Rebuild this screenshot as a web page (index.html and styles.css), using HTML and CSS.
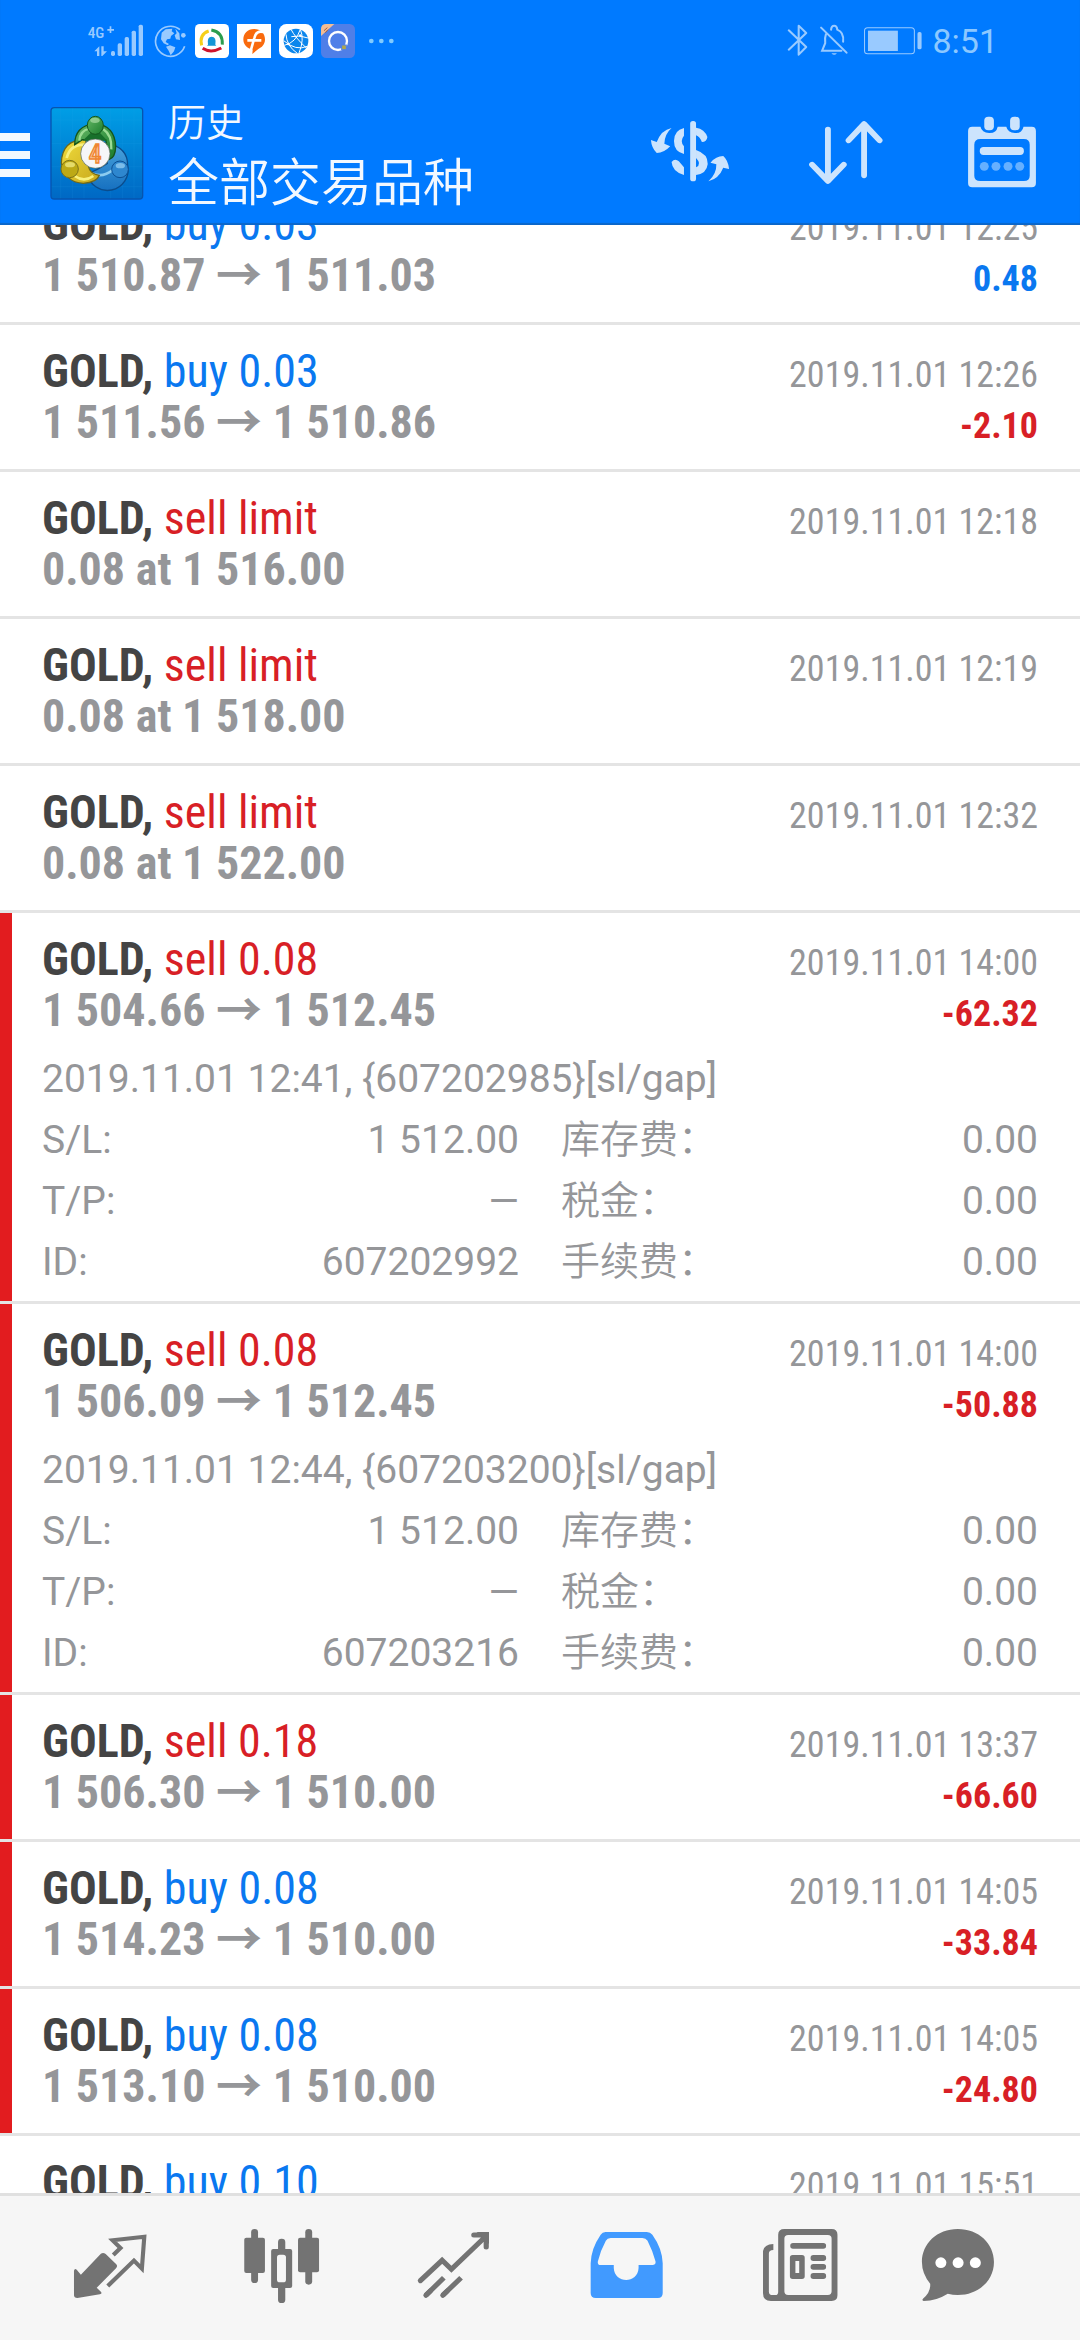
FILE: index.html
```
<!DOCTYPE html>
<html lang="zh-CN">
<head>
<meta charset="utf-8">
<meta name="viewport" content="width=device-width">
<title>历史</title>
<link rel="stylesheet" href="styles.css">
</head>
<body>
<header class="top">
  <div class="status">
    <svg width="57" height="34" viewBox="24 26 171 102" fill="#99caff" aria-hidden="true">
      <text class="network" x="23" y="68">4G</text>
      <path d="M82 41h20v5H82zM89 33h5v20h-5z"/>
      <path d="M43 108L58 93V122H51V108ZM64 93h7v15h10L67 122h-3z"/>
      <rect x="93" y="107" width="12" height="15" rx="5"/><rect x="113" y="84" width="13" height="38" rx="5"/><rect x="134" y="65" width="13" height="57" rx="5"/><rect x="155" y="46" width="13" height="76" rx="5"/><rect x="176" y="28" width="13" height="94" rx="5"/>
    </svg>
    <svg width="34" height="34" viewBox="219 26 102 102" aria-hidden="true">
      <path d="M300 43A45 45 0 1 0 314 93" fill="none" stroke="#99caff" stroke-width="5"/>
      <circle cx="310" cy="60" r="7" fill="#99caff"/>
      <path d="M245 52l12-10 20-2-2 8 8 6-10 8-2 8-10 2-4 8 10 6-4 4-12-6-8-12zM286 40l12 14 2 20-12-2-4-12 6-6zM258 94l12-4 16 6-4 12-10 12-6-14z" fill="#99caff"/>
    </svg>
    <svg width="34" height="34" viewBox="345 26 102 102" fill="none" stroke-width="9" aria-hidden="true">
      <rect x="345" y="26" width="102" height="102" rx="14" fill="#fff"/>
      <path d="M365 90Q357 57 386 47" stroke="#f5cf18"/>
      <path d="M394 44Q429 50 427 88" stroke="#2a9d4e"/>
      <path d="M368 99Q392 115 424 98" stroke="#d0142c"/>
      <path d="M384 88q-4-24 11-24t11 24l3 3h-28z" fill="#1596d6"/>
    </svg>
    <svg width="34" height="34" viewBox="141 26 102 102" aria-hidden="true">
      <rect x="141" y="26" width="102" height="102" fill="#fff"/>
      <path d="M192 41c20 0 33 14 33 31 0 16-10 25-20 29l-18 15 1-13c-17-3-28-15-28-31 0-17 13-31 32-31z" fill="#f96a0d"/>
      <path d="M220 50Q198 45 193 68L181 110M172 75h42" fill="none" stroke="#fff" stroke-width="8"/>
    </svg>
    <svg width="34" height="34" viewBox="267 26 102 102" aria-hidden="true">
      <rect x="267" y="26" width="102" height="102" rx="22" fill="#fff"/>
      <circle cx="318" cy="77" r="37" fill="#0b86ec"/>
      <path d="M303 42Q315 66 349 98M283 90Q318 82 331 42M288 57Q290 92 322 114M331 42Q344 72 327 113M304 64Q330 58 354 68M281 76Q318 108 352 93" fill="none" stroke="#fff" stroke-width="3"/>
      <circle cx="331" cy="61" r="4" fill="#fff"/><circle cx="295" cy="86" r="4" fill="#fff"/>
    </svg>
    <svg width="34" height="34" viewBox="393 26 102 102" aria-hidden="true">
      <rect x="393" y="26" width="102" height="102" rx="16" fill="#4f7fe8"/>
      <path d="M393 62V42q0-16 16-16h24z" fill="#f3bd94"/>
      <path d="M402 46l10-9M406 52l8-9" stroke="#a85a3a" stroke-width="3"/>
      <circle cx="444" cy="77" r="27" fill="none" stroke="#fff" stroke-width="7"/>
      <rect x="455" y="89" width="14" height="14" fill="#b2a84c" stroke="#4f7fe8" stroke-width="3"/>
    </svg>
    <svg width="34" height="34" viewBox="519 26 102 102" fill="#80cbff" aria-hidden="true">
      <circle cx="544" cy="77" r="7"/><circle cx="574" cy="77" r="7"/><circle cx="604" cy="77" r="7"/>
    </svg>
    <span class="spacer"></span>
    <svg width="24" height="34" viewBox="711 71 70 102" preserveAspectRatio="none" fill="none" stroke="#99caff" stroke-width="6" stroke-linejoin="round" stroke-linecap="round" aria-hidden="true">
      <path d="M719 90L770 140 748 163V76L770 98 719 148"/>
    </svg>
    <svg width="32" height="34" viewBox="804 71 93 102" preserveAspectRatio="none" fill="none" stroke="#99caff" stroke-width="6" stroke-linecap="round" aria-hidden="true">
      <path d="M813 82L887 157M827 102Q823 112 825 128L816 151H872M842 88Q843 76 851 76T860 88Q880 96 877 124"/>
      <path d="M843 159h16q-8 9-16 0z" fill="#99caff" stroke="none"/>
    </svg>
    <svg width="66" height="34" viewBox="921 71 192 102" preserveAspectRatio="none" fill="#99caff" aria-hidden="true">
      <rect x="940" y="82" width="145" height="78" rx="9" fill="none" stroke="#99caff" stroke-width="3"/>
      <rect x="950" y="91" width="87" height="61"/><rect x="1094" y="95" width="12" height="52" rx="5"/>
    </svg>
    <span class="clock">8:51</span>
  </div>
  <div class="appbar">
    <button class="menu" aria-label="菜单"><i></i><i></i><i></i></button>
    <svg class="logo" width="106" height="106" viewBox="0 0 318 318" aria-hidden="true">
      <defs>
        <linearGradient id="tile" x2="0" y2="1"><stop stop-color="#009ee6"/><stop offset="1" stop-color="#0068c4"/></linearGradient>
        <linearGradient id="green" x2="1" y2="1"><stop stop-color="#66b866"/><stop offset="1" stop-color="#1a7c2c"/></linearGradient>
        <linearGradient id="gold" x2="1" y2="1"><stop stop-color="#f0dc3c"/><stop offset="1" stop-color="#c8a81c"/></linearGradient>
        <linearGradient id="blue" x2="0" y2="1"><stop stop-color="#4aa4dc"/><stop offset="1" stop-color="#1670c0"/></linearGradient>
      </defs>
      <rect x="21" y="23" width="275" height="274" rx="10" fill="url(#tile)" stroke="#0754ae" stroke-width="4"/>
      <path d="M50 25v270M85 25v270M120 25v270M200 25v270M235 25v270M270 25v270M23 60h272M23 130h272M23 200h272M23 260h272" stroke="#27a6ea" stroke-opacity=".18" stroke-width="2"/>
      <path d="M190 130Q252 142 251 197A53 53 0 0 1 130 222Q160 210 190 190Z" fill="url(#blue)" stroke="#0a4c8c" stroke-width="4"/>
      <path d="M128 212Q170 240 207 209" fill="none" stroke="#8cccf0" stroke-width="8"/>
      <path d="M125 119Q54 118 52 189Q62 247 118 250Q158 248 166 226Q137 221 133 198Z" fill="url(#gold)" stroke="#6f681b" stroke-width="4"/>
      <path d="M68 174Q78 134 120 134M92 228Q120 248 148 228" fill="none" stroke="#f8f07d" stroke-width="8"/>
      <path d="M92 134Q92 78 152 70Q213 76 215 140Q214 172 196 178L185 119H115Z" fill="url(#green)" stroke="#14551c" stroke-width="4"/>
      <path d="M106 122Q108 92 136 86M178 88Q204 105 202 148" fill="none" stroke="#9bdb93" stroke-width="7"/>
      <path d="M116 122l26-25h24l24 25z" fill="#18702b"/>
      <ellipse cx="154" cy="76" rx="24" ry="27" fill="url(#green)" stroke="#14551c" stroke-width="3"/><ellipse cx="153" cy="61" rx="14" ry="8" fill="#a9dba4" fill-opacity=".7"/>
      <circle cx="77" cy="207" r="26" fill="#bda916" stroke="#7d731a" stroke-width="3"/><ellipse cx="78" cy="194" rx="15" ry="8" fill="#efe77f" fill-opacity=".8"/>
      <circle cx="228" cy="208" r="25" fill="#2e87cf" stroke="#0c4f93" stroke-width="3"/><ellipse cx="229" cy="197" rx="14" ry="8" fill="#9dd3f4" fill-opacity=".7"/>
      <circle cx="154" cy="161" r="44" fill="#f6f6f8" stroke="#4b6050" stroke-width="2"/>
      <text class="logo-digit" x="153" y="189" text-anchor="middle">4</text>
    </svg>
    <div class="heading">
      <h1>历史</h1>
      <p>全部交易品种</p>
    </div>
    <button class="action" aria-label="品种">
      <svg width="156" height="144" viewBox="209 243 453 432" preserveAspectRatio="none" fill="#cce4fd">
        <rect x="436" y="363" width="17" height="181" rx="8"/>
        <path d="M418 384Q389 391 389 423T418 462V439Q405 423 418 407ZM453 383Q478 387 486 411Q484 426 470 426Q465 411 453 406ZM453 450Q488 462 487 492Q484 521 453 525V502Q471 493 453 474ZM382 486Q392 473 403 484L418 502V525Q384 515 382 486Z"/>
        <path d="M382 384Q352 390 339 426L322 420Q324 445 339 459Q360 459 378 439L361 431Q362 402 382 384ZM489 544Q520 535 532 503L549 507Q546 480 532 468Q511 468 495 488L512 493Q513 522 489 544Z"/>
      </svg>
    </button>
    <button class="action" aria-label="排序">
      <svg width="156" height="144" viewBox="662 243 453 432" preserveAspectRatio="none" fill="none" stroke="#cce4fd" stroke-width="17" stroke-linecap="round" stroke-linejoin="round">
        <path d="M836 389V541M790 494L836 543 882 494M941 526V374M896 421L941 372 986 421"/>
      </svg>
    </button>
    <button class="action" aria-label="日期">
      <svg width="156" height="144" viewBox="1115 243 453 432" preserveAspectRatio="none" fill="#cce4fd">
        <path fill-rule="evenodd" d="M1255 380H1279Q1283 398 1304 399T1329 380H1354Q1358 398 1379 399T1404 380H1428Q1440 380 1440 393V549Q1440 562 1428 562H1255Q1243 562 1243 549V393Q1243 380 1255 380ZM1279 417Q1261 417 1261 434V527Q1261 543 1279 543H1405Q1422 543 1422 527V434Q1422 417 1405 417Z"/>
        <rect x="1290" y="350" width="28" height="41" rx="12"/><rect x="1365" y="350" width="28" height="41" rx="12"/>
        <rect x="1277" y="441" width="128" height="24" rx="11"/>
        <g fill="#66b0ff"><circle cx="1290" cy="499" r="13"/><circle cx="1324" cy="499" r="13"/><circle cx="1359" cy="499" r="13"/><circle cx="1393" cy="499" r="13"/></g>
      </svg>
    </button>
  </div>
</header>

<main class="history">
  <ul class="deals">
    <li class="deal">
      <div class="line"><span><b>GOLD,</b> <span class="buy">buy 0.03</span></span><time>2019.11.01 12:25</time></div>
      <div class="line"><span class="price">1 510.87 → 1 511.03</span><span class="profit buy">0.48</span></div>
    </li>
    <li class="deal">
      <div class="line"><span><b>GOLD,</b> <span class="buy">buy 0.03</span></span><time>2019.11.01 12:26</time></div>
      <div class="line"><span class="price">1 511.56 → 1 510.86</span><span class="profit sell">-2.10</span></div>
    </li>
    <li class="deal">
      <div class="line"><span><b>GOLD,</b> <span class="sell">sell limit</span></span><time>2019.11.01 12:18</time></div>
      <div class="line"><span class="price">0.08 at 1 516.00</span></div>
    </li>
    <li class="deal">
      <div class="line"><span><b>GOLD,</b> <span class="sell">sell limit</span></span><time>2019.11.01 12:19</time></div>
      <div class="line"><span class="price">0.08 at 1 518.00</span></div>
    </li>
    <li class="deal">
      <div class="line"><span><b>GOLD,</b> <span class="sell">sell limit</span></span><time>2019.11.01 12:32</time></div>
      <div class="line"><span class="price">0.08 at 1 522.00</span></div>
    </li>
    <li class="deal stopped open">
      <div class="line"><span><b>GOLD,</b> <span class="sell">sell 0.08</span></span><time>2019.11.01 14:00</time></div>
      <div class="line"><span class="price">1 504.66 → 1 512.45</span><span class="profit sell">-62.32</span></div>
      <div class="details">
        <p>2019.11.01 12:41, {607202985}[sl/gap]</p>
        <dl>
          <div><dt>S/L:</dt><dd>1 512.00</dd></div><div><dt class="zh">库存费：</dt><dd>0.00</dd></div>
          <div><dt>T/P:</dt><dd>—</dd></div><div><dt class="zh">税金：</dt><dd>0.00</dd></div>
          <div><dt>ID:</dt><dd>607202992</dd></div><div><dt class="zh">手续费：</dt><dd>0.00</dd></div>
        </dl>
      </div>
    </li>
    <li class="deal stopped open">
      <div class="line"><span><b>GOLD,</b> <span class="sell">sell 0.08</span></span><time>2019.11.01 14:00</time></div>
      <div class="line"><span class="price">1 506.09 → 1 512.45</span><span class="profit sell">-50.88</span></div>
      <div class="details">
        <p>2019.11.01 12:44, {607203200}[sl/gap]</p>
        <dl>
          <div><dt>S/L:</dt><dd>1 512.00</dd></div><div><dt class="zh">库存费：</dt><dd>0.00</dd></div>
          <div><dt>T/P:</dt><dd>—</dd></div><div><dt class="zh">税金：</dt><dd>0.00</dd></div>
          <div><dt>ID:</dt><dd>607203216</dd></div><div><dt class="zh">手续费：</dt><dd>0.00</dd></div>
        </dl>
      </div>
    </li>
    <li class="deal stopped">
      <div class="line"><span><b>GOLD,</b> <span class="sell">sell 0.18</span></span><time>2019.11.01 13:37</time></div>
      <div class="line"><span class="price">1 506.30 → 1 510.00</span><span class="profit sell">-66.60</span></div>
    </li>
    <li class="deal stopped">
      <div class="line"><span><b>GOLD,</b> <span class="buy">buy 0.08</span></span><time>2019.11.01 14:05</time></div>
      <div class="line"><span class="price">1 514.23 → 1 510.00</span><span class="profit sell">-33.84</span></div>
    </li>
    <li class="deal stopped">
      <div class="line"><span><b>GOLD,</b> <span class="buy">buy 0.08</span></span><time>2019.11.01 14:05</time></div>
      <div class="line"><span class="price">1 513.10 → 1 510.00</span><span class="profit sell">-24.80</span></div>
    </li>
    <li class="deal">
      <div class="line"><span><b>GOLD,</b> <span class="buy">buy 0.10</span></span><time>2019.11.01 15:51</time></div>
    </li>
  </ul>
</main>

<nav class="tabs">
  <button aria-label="行情">
    <svg width="172" height="144" viewBox="70 228 499 432" preserveAspectRatio="none" fill="#737373">
      <path d="M293 401Q300 396 307 402L337 432Q343 438 337 445L281 503 293 515Q298 521 290 523L225 534Q215 534 215 525V452Q217 444 223 449L235 464Z"/>
      <path d="M329 405L350 384 327 361 419 350 412 446 389 422 313 498" fill="none" stroke="#737373" stroke-width="12"/>
    </svg>
  </button>
  <button aria-label="图表">
    <svg width="172" height="144" viewBox="569 228 499 432" preserveAspectRatio="none" fill="#737373">
      <rect x="729" y="327" width="20" height="162" rx="10"/><rect x="709" y="353" width="60" height="106" rx="6"/>
      <rect x="886" y="327" width="20" height="167" rx="10"/><rect x="865" y="353" width="61" height="104" rx="6"/>
      <rect x="807" y="356" width="21" height="193" rx="10"/><rect x="787" y="387" width="61" height="117" rx="6"/>
      <rect x="804" y="404" width="26" height="83" rx="8" fill="#f6f6f6"/>
    </svg>
  </button>
  <button aria-label="交易">
    <svg width="172" height="144" viewBox="1069 228 499 432" preserveAspectRatio="none" fill="none" stroke="#737373" stroke-width="15">
      <g stroke-linecap="round"><path d="M1221 482L1284 421 1311 448 1408 352M1376 345H1412V381"/><path d="M1237 526L1250 513M1286 526L1299 513"/></g>
      <path d="M1237 526L1289 473M1286 526L1339 473"/>
      <path d="M1384 336H1420V372Z" fill="#737373" stroke="none"/>
    </svg>
  </button>
  <button aria-label="历史" aria-current="page">
    <svg width="172" height="144" viewBox="0 228 499 432" preserveAspectRatio="none">
      <path fill="#419aff" fill-rule="evenodd" d="M190 336H310Q320 336 326 344Q355 386 356 430V519Q356 534 342 534H162Q147 534 147 519V430Q148 386 176 344Q181 336 190 336ZM205 354Q195 354 191 362Q176 390 168 424Q166 435 176 435H214V444C216 492 284 492 286 444V435H326Q337 435 335 424Q326 390 312 362Q307 354 297 354Z"/>
    </svg>
  </button>
  <button aria-label="新闻">
    <svg width="172" height="144" viewBox="499 228 499 432" preserveAspectRatio="none" fill="#737373">
      <path fill-rule="evenodd" d="M709 327H846Q863 327 863 344V526Q863 543 846 543H670Q647 543 647 520V393Q650 373 677 372V390Q664 390 664 401V515Q664 525 675 525H683Q691 525 691 515V344Q691 327 709 327ZM720 345Q709 345 709 356V514Q709 525 720 525H835Q846 525 846 514V356Q846 345 835 345Z"/>
      <rect x="726" y="369" width="104" height="17" rx="8"/>
      <path fill-rule="evenodd" d="M733 405H760Q768 405 768 413V469Q768 477 760 477H733Q725 477 725 469V413Q725 405 733 405ZM741 423V459H752V423Z"/>
      <rect x="785" y="405" width="45" height="18" rx="8"/><rect x="785" y="432" width="45" height="17" rx="8"/><rect x="785" y="459" width="45" height="18" rx="8"/>
    </svg>
  </button>
  <button aria-label="消息">
    <svg width="172" height="144" viewBox="999 228 499 432" preserveAspectRatio="none" fill="#737373">
      <path d="M1213 327C1274 327 1318 371 1318 426S1274 525 1213 525Q1198 525 1184 521Q1152 542 1114 543Q1108 541 1112 536Q1135 517 1133 491Q1109 461 1109 426C1109 371 1153 327 1213 327Z"/>
      <g fill="#fff"><circle cx="1164" cy="428" r="16"/><circle cx="1214" cy="428" r="16"/><circle cx="1264" cy="428" r="16"/></g>
    </svg>
  </button>
</nav>
</body>
</html>
```
FILE: styles.css
```
* { box-sizing: border-box; }

body {
  margin: 0;
  height: 100vh;
  display: flex;
  flex-direction: column;
  background: #fff;
  color: #959699;
  font-family: Roboto, "Noto Sans CJK SC", sans-serif;
}

h1, p, ul, dl, dd { margin: 0; padding: 0; }
svg { display: block; flex: none; }
button { border: 0; padding: 0; background: none; }

/* Header */
.top {
  flex: none;
  background: #007aff;
  box-shadow: inset 0 -2px 1px #0b66c9;
  color: #f2f8ff;
}
.status {
  display: flex;
  align-items: center;
  gap: 8px;
  height: 81px;
  padding: 0 82px 0 88px;
}
.spacer { flex: 1; }
.network { font: 500 46px "Roboto Condensed", sans-serif; }
.clock { font-size: 34px; line-height: 40px; color: #8cc8ff; }

.appbar {
  display: flex;
  align-items: center;
  height: 144px;
}
.menu {
  display: flex;
  flex-direction: column;
  gap: 10px;
  width: 30px;
  padding-top: 4px;
}
.menu i { height: 8px; background: #f2f8ff; }
.logo { margin: 0 18px 0 14px; }
.heading { flex: 1; padding-top: 4px; font-weight: 350; }
.heading h1 { font-size: 38px; font-weight: 350; line-height: 58px; }
.heading p { font-size: 51px; line-height: 64px; }
.logo-digit {
  font: 500 76px "Roboto Condensed", sans-serif;
  fill: #f9c596;
  stroke: #ef8632;
  stroke-width: 4px;
}

/* Deal list */
.history { flex: 1; min-height: 0; overflow: hidden; }
.deals { margin-top: -47px; list-style: none; }
.deal {
  padding: 21px 42px;
  border-bottom: 3px solid #e4e4e4;
  font-family: "Roboto Condensed", "Noto Sans CJK SC", sans-serif;
}
.stopped { box-shadow: inset 12px 0 #e21c1f; }
.open { padding-bottom: 8px; }
.line {
  display: flex;
  justify-content: space-between;
  align-items: baseline;
  font-size: 46px;
  line-height: 51px;
}
.line b { color: #444; }
.line time, .profit { font-size: 36px; line-height: 40px; }
.price, .profit { font-weight: 700; }
.buy { color: #0a78f0; }
.sell { color: #d81f26; }

.details {
  margin-top: 13px;
  font-family: Roboto, "Noto Sans CJK SC", sans-serif;
  font-size: 39px;
  line-height: 61px;
}
.details dl {
  display: grid;
  grid-template-columns: 1fr 1fr;
  column-gap: 42px;
}
.details dl div { display: flex; justify-content: space-between; }
.zh { font-weight: 350; }

/* Bottom tabs */
.tabs {
  flex: none;
  display: flex;
  padding: 0 24px;
  border-top: 3px solid #e0e0e0;
  background: #f6f6f6;
}
.tabs button { flex: 1; display: flex; justify-content: center; }
```
